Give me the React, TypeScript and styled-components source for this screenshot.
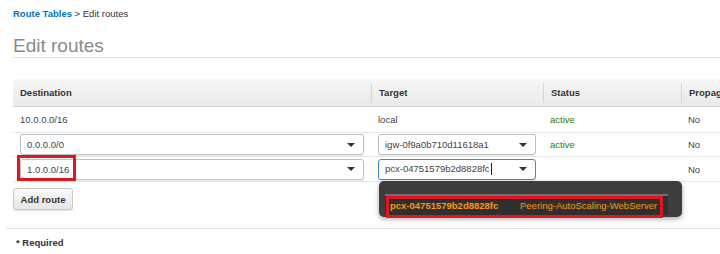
import React from "react";
import styled, { createGlobalStyle } from "styled-components";

const GlobalStyle = createGlobalStyle`
  body {
    margin: 0;
    background: #fff;
    font-family: "Liberation Sans", Arial, sans-serif;
    font-size: 9.5px;
    color: #444;
    overflow: hidden;
  }
`;

const Page = styled.div`
  width: 720px;
  height: 254px;
  overflow: hidden;
`;

const Content = styled.div`
  padding-left: 13px;
`;

const Breadcrumb = styled.div`
  padding-top: 8px;
  line-height: 12px;
  color: #333;
  white-space: nowrap;
`;

const Crumb = styled.a`
  color: #0073bb;
  font-weight: bold;
  text-decoration: none;
`;

const Title = styled.h1`
  margin: 15px 0 0 0;
  padding-bottom: 0;
  font-size: 19px;
  line-height: 22px;
  font-weight: normal;
  color: #8a8a8a;
  border-bottom: 1px solid #e2e2e2;
`;

const Table = styled.div`
  margin-top: 21px;
  width: 820px;
`;

const Row = styled.div<{ $h: number; $header?: boolean }>`
  display: grid;
  grid-template-columns: 358px 172px 138px 152px;
  align-items: center;
  height: ${(p) => p.$h}px;
  border-bottom: 1px solid ${(p) => (p.$header ? "#d3d3d3" : "#e8e8e8")};
  background: ${(p) => (p.$header ? "linear-gradient(to bottom, #f8f8f8, #e9e9e9)" : "#fff")};
  color: ${(p) => (p.$header ? "#333" : "#444")};
  font-weight: ${(p) => (p.$header ? "bold" : "normal")};
`;

const Cell = styled.div<{ $divider?: boolean }>`
  position: relative;
  padding: 0 7px;
  white-space: nowrap;
  display: flex;
  align-items: center;
  border-left: ${(p) => (p.$divider ? "1px solid #d6d6d6" : "none")};
  height: ${(p) => (p.$divider ? "20px" : "100%")};
`;

const Active = styled.span`
  color: #1d8102;
`;

const Select = styled.div<{ $focus?: boolean }>`
  flex: 1;
  height: 21px;
  box-sizing: border-box;
  display: flex;
  align-items: center;
  justify-content: space-between;
  padding: 0 8px 0 6px;
  border: 1px solid ${(p) => (p.$focus ? "#3b8ad8" : "#b9c2c2")};
  border-radius: 3px;
  background: #fff;
  box-shadow: 0 1px 1px rgba(0, 0, 0, 0.08);
  color: #444;
`;

const Caret = styled.span`
  width: 0;
  height: 0;
  border-left: 4px solid transparent;
  border-right: 4px solid transparent;
  border-top: 4px solid #333;
`;

const TextCursor = styled.span`
  display: inline-block;
  width: 1px;
  height: 12px;
  background: #222;
  vertical-align: middle;
  margin-left: 1px;
`;

const Annotation = styled.div<{ $left: number; $top: number; $w: number; $h: number }>`
  position: absolute;
  left: ${(p) => p.$left}px;
  top: ${(p) => p.$top}px;
  width: ${(p) => p.$w}px;
  height: ${(p) => p.$h}px;
  box-sizing: border-box;
  border: 3px solid #e3141c;
  pointer-events: none;
  z-index: 3;
`;

const Menu = styled.div`
  position: absolute;
  left: 8px;
  top: 24px;
  width: 303px;
  height: 36px;
  box-sizing: border-box;
  padding: 13px 14px 0 6px;
  background: #3d3d3d;
  border-radius: 5px;
  box-shadow: 0 2px 5px rgba(0, 0, 0, 0.35);
  z-index: 2;
`;

const MenuList = styled.div`
  border-top: 2px solid #6e6e6e;
  background: #2f2f2f;
  height: 19px;
`;

const Option = styled.div`
  display: flex;
  align-items: center;
  height: 19px;
  padding-left: 5px;
  color: #f8981d;
  white-space: nowrap;
`;

const OptionId = styled.span`
  width: 130px;
  font-weight: bold;
`;

const Button = styled.button`
  margin-top: 6px;
  height: 22px;
  width: 60px;
  padding: 0;
  font-family: inherit;
  font-size: 9.5px;
  font-weight: bold;
  color: #333;
  background: linear-gradient(to bottom, #fbfbfb, #e6e6e6);
  border: 1px solid #c8c8c8;
  border-radius: 3px;
  box-shadow: 0 1px 1px rgba(0, 0, 0, 0.12);
`;

const Footer = styled.div`
  margin: 18px 0 0 6px;
  border-top: 1px solid #e2e2e2;
  padding: 8px 0 0 10px;
  font-weight: bold;
  color: #333;
  line-height: 12px;
`;

export default function App() {
  return (
    <Page>
      <GlobalStyle />
      <Content>
        <Breadcrumb>
          <Crumb>Route Tables</Crumb> &gt; Edit routes
        </Breadcrumb>
        <Title>Edit routes</Title>
        <Table>
          <Row $h={27} $header>
            <Cell>Destination</Cell>
            <Cell $divider>Target</Cell>
            <Cell $divider>Status</Cell>
            <Cell $divider>Propagated</Cell>
          </Row>
          <Row $h={25}>
            <Cell>10.0.0.0/16</Cell>
            <Cell>local</Cell>
            <Cell>
              <Active>active</Active>
            </Cell>
            <Cell>No</Cell>
          </Row>
          <Row $h={23}>
            <Cell>
              <Select>
                <span>0.0.0.0/0</span>
                <Caret />
              </Select>
            </Cell>
            <Cell>
              <Select>
                <span>igw-0f9a0b710d11618a1</span>
                <Caret />
              </Select>
            </Cell>
            <Cell>
              <Active>active</Active>
            </Cell>
            <Cell>No</Cell>
          </Row>
          <Row $h={24}>
            <Cell>
              <Select>
                <span>1.0.0.0/16</span>
                <Caret />
              </Select>
              <Annotation $left={4} $top={-2} $w={59} $h={26} />
            </Cell>
            <Cell>
              <Select $focus>
                <span>
                  pcx-04751579b2d8828fc
                  <TextCursor />
                </span>
                <Caret />
              </Select>
              <Menu>
                <MenuList>
                  <Option>
                    <OptionId>pcx-04751579b2d8828fc</OptionId>
                    <span>Peering-AutoScaling-WebServer</span>
                  </Option>
                </MenuList>
                <Annotation $left={7} $top={15} $w={277} $h={22} />
              </Menu>
            </Cell>
            <Cell />
            <Cell>No</Cell>
          </Row>
        </Table>
        <Button>Add route</Button>
      </Content>
      <Footer>* Required</Footer>
    </Page>
  );
}
